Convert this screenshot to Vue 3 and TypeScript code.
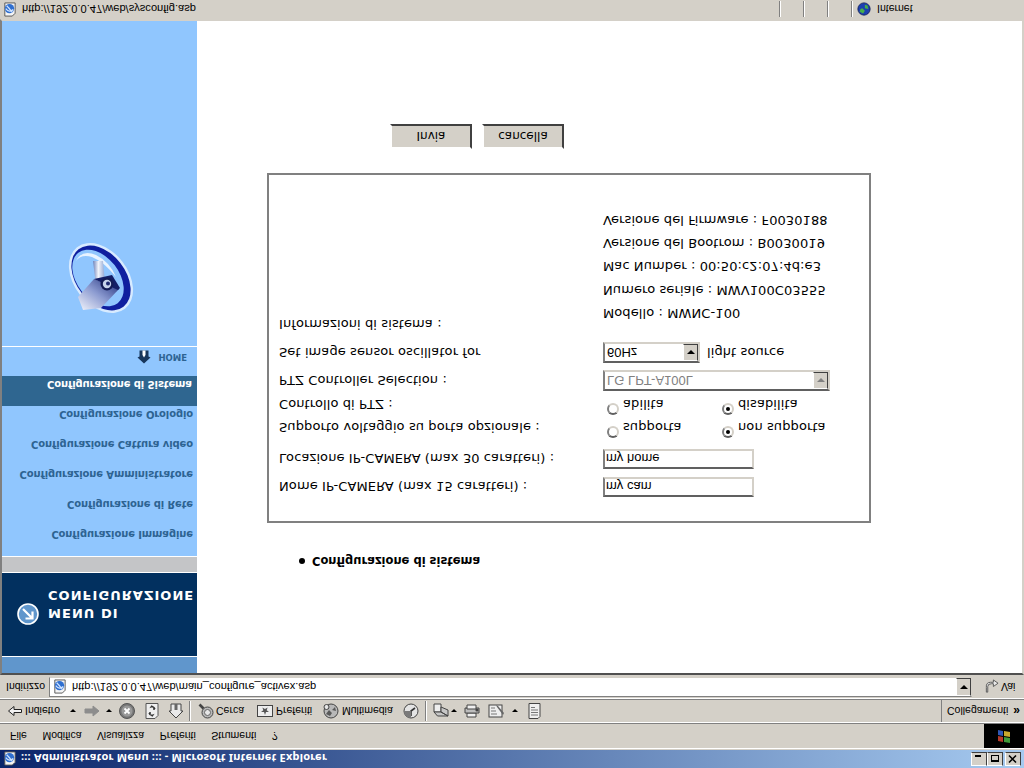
<template>
  <div class="window">
    <div class="titlebar">
      <svg class="title-icon" viewBox="0 0 16 16" v-html="icons.page" />
      <span class="title-text">::: Administrator Menu ::: - Microsoft Internet Explorer</span>
      <div class="win-buttons">
        <span class="win-btn"><i class="glyph-min" /></span>
        <span class="win-btn"><i class="glyph-max" /></span>
        <span class="win-btn close"><svg viewBox="0 0 10 10" width="10" height="10"><path d="M1 1.5 L8 8.5 M8 1.5 L1 8.5" stroke="#000" stroke-width="1.6" /></svg></span>
      </div>
    </div>

    <div class="menubar">
      <span v-for="m in menuItems" :key="m">{{ m }}</span>
      <div class="flag">
        <svg viewBox="0 0 16 16" width="16" height="16">
          <path d="M2 3 L7 2 V7 L2 8Z" fill="#b5392a" />
          <path d="M8 2 L14 1 V6 L8 7Z" fill="#3f9a3a" />
          <path d="M2 9 L7 8 V13 L2 14Z" fill="#2f57b5" />
          <path d="M8 8 L14 7 V12 L8 13Z" fill="#c9a92e" />
        </svg>
      </div>
    </div>

    <div class="toolbar">
      <template v-for="(t, i) in toolItems" :key="i">
        <span class="tool" :style="{ width: t.w + 'px' }">
          <svg v-if="t.icon" class="tool-icon" viewBox="0 0 16 16" v-html="icons[t.icon]" />
          <span v-else-if="t.label">{{ t.label }}</span>
          <i v-else-if="t.caret" class="caret" />
          <i v-else class="sep" />
        </span>
      </template>
      <div class="links">Collegamenti <b class="chevrons">»</b></div>
    </div>

    <div class="addressbar">
      <span class="addr-label">Indirizzo</span>
      <div class="addr-box">
        <svg class="addr-icon" viewBox="0 0 16 16" v-html="icons.page" />
        <span class="addr-url">http://192.0.0.47/web/main_configure_activex.asp</span>
        <span class="combo-btn"><i class="caret dark" /></span>
      </div>
      <span class="go">
        <svg viewBox="0 0 16 16" width="15" height="15">
          <path d="M4 2 V8 Q4 11 8 11 H10 V8 L15 11.5 L10 15 V12.5 H7 Q2 12.5 2.5 7 V2Z" fill="#e8e8e8" stroke="#555" stroke-width="1" />
        </svg>
        Vai
      </span>
    </div>

    <div class="frame">
      <aside class="sidebar">
        <div class="strip" />
        <div class="side-title">
          <svg class="side-arrow" viewBox="0 0 22 22" width="22" height="22">
            <circle cx="11" cy="11" r="10" fill="#5f96cc" stroke="#fff" stroke-width="1.6" />
            <path d="M6 16 L15 7 M8.5 6.5 H15.5 V13.5" fill="none" stroke="#fff" stroke-width="2.2" />
          </svg>
          <div class="side-title-text">MENU DI<br />CONFIGURAZIONE</div>
        </div>
        <div class="gray-band" />
        <nav class="side-nav">
          <a v-for="n in navItems" :key="n" class="nav-item" :class="{ active: n === activeNav }">{{ n }}</a>
          <a class="nav-home">
            <svg viewBox="0 0 14 14" width="14" height="14">
              <path d="M7 0.5 L13.5 6.5 L11.5 7.5 V13.5 H2.5 V7.5 L0.5 6.5Z" fill="#17365c" />
              <path d="M5.5 9 L7 6.5 L8.5 9 V13.5 H5.5Z" fill="#fff" />
            </svg>
            <span>HOME</span>
          </a>
          <div class="logo-area">
            <!-- drawn in the orientation of the capture, hence the extra flip -->
            <svg viewBox="0 0 110 90" width="110" height="90">
              <defs>
                <linearGradient id="cam-body" x1="0" y1="1" x2="1" y2="0">
                  <stop offset="0" stop-color="#f4f6fc" />
                  <stop offset="0.5" stop-color="#8b9ad0" />
                  <stop offset="1" stop-color="#1b2a78" />
                </linearGradient>
                <linearGradient id="cam-stem" x1="0" y1="0" x2="1" y2="0">
                  <stop offset="0" stop-color="#6f82b8" />
                  <stop offset="0.45" stop-color="#f2f5fb" />
                  <stop offset="1" stop-color="#8fa3cf" />
                </linearGradient>
              </defs>
              <g transform="matrix(1 0 0 -1 0 90)">
                <ellipse cx="61" cy="43" rx="39" ry="27" transform="rotate(52 61 43)" fill="#d8ebff" />
                <ellipse cx="61" cy="43" rx="36.5" ry="24.5" transform="rotate(52 61 43)" fill="#0f1f9f" />
                <ellipse cx="58" cy="43" rx="32" ry="21" transform="rotate(52 58 43)" fill="#90c6fe" />
                <path d="M36 26 Q42 14 56 20 Q70 27 76 42 Q64 27 52 22 Q41 19 36 26Z" fill="#e8f3ff" />
                <path d="M53 26 L63 26 L65 48 L56 50Z" fill="url(#cam-stem)" />
                <path d="M38 62 L54 44 L79 54 L61 73 L43 75Z" fill="url(#cam-body)" />
                <path d="M54 44 L72 40 L80 53 L78 55Z" fill="#141f66" />
                <circle cx="67" cy="49" r="6.5" fill="#131c55" />
                <circle cx="67" cy="49" r="4.2" fill="#c7d4ec" />
                <circle cx="68" cy="48.5" r="2" fill="#1d2a70" />
              </g>
            </svg>
          </div>
        </nav>
      </aside>

      <main class="content">
        <ul class="crumbs">
          <li>Configurazione di sistema</li>
        </ul>

        <form class="panel" @submit.prevent>
          <div class="row">
            <label>Nome IP-CAMERA (max 15 caratteri) :</label>
            <input class="text-field" value="my cam" />
          </div>
          <div class="row gap-8">
            <label>Locazione IP-CAMERA (max 30 caratteri) :</label>
            <input class="text-field" value="my home" />
          </div>
          <div class="row radio-row gap-10">
            <label>Supporto voltaggio su porta opzionale :</label>
            <div class="radios">
              <span class="radio-opt"><input class="radio" type="radio" name="volt" />supporta</span>
              <span class="radio-opt"><input class="radio" type="radio" name="volt" checked />non supporta</span>
            </div>
          </div>
          <div class="row radio-row gap-1">
            <label>Controllo di PTZ :</label>
            <div class="radios">
              <span class="radio-opt"><input class="radio" type="radio" name="ptz" />abilita</span>
              <span class="radio-opt"><input class="radio" type="radio" name="ptz" checked />disabilita</span>
            </div>
          </div>
          <div class="row gap-3">
            <label>PTZ Controller Selection :</label>
            <div class="select wide disabled">
              <span>LG LPT-A100L</span>
              <span class="combo-btn"><i class="caret gray" /></span>
            </div>
          </div>
          <div class="row gap-7">
            <label>Set image sensor oscillator for</label>
            <div class="select-line">
              <div class="select narrow">
                <span>60Hz</span>
                <span class="combo-btn"><i class="caret dark" /></span>
              </div>
              <span>light source</span>
            </div>
          </div>
          <div class="row info gap-10">
            <label>Informazioni di sistema :</label>
            <div class="info-list">
              <div v-for="line in infoLines" :key="line">{{ line }}</div>
            </div>
          </div>
        </form>

        <div class="actions">
          <button type="button" class="btn">Invia</button>
          <button type="button" class="btn">cancella</button>
        </div>
      </main>
    </div>

    <div class="statusbar">
      <svg class="status-icon" viewBox="0 0 16 16" v-html="icons.page" />
      <span class="status-url">http://192.0.0.47/web/sysconfig.asp</span>
      <span class="cell" />
      <span class="cell" />
      <span class="cell" />
      <span class="cell zone">
        <svg viewBox="0 0 16 16" width="14" height="14" v-html="icons.globe" />
        Internet
      </span>
    </div>
  </div>
</template>

<script setup lang="ts">
interface ToolItem {
  w: number
  icon?: string
  label?: string
  caret?: boolean
}

const menuItems = ['File', 'Modifica', 'Visualizza', 'Preferiti', 'Strumenti', '?']

const navItems = [
  'Configurazione Immagine',
  'Configurazione di Rete',
  'Configurazione Amministratore',
  'Configurazione Cattura video',
  'Configurazione Orologio',
  'Configurazione di Sistema'
]
const activeNav = 'Configurazione di Sistema'

const infoLines = [
  'Modello : MWNC-100',
  'Numero seriale : MWV100C03555',
  'Mac Number : 00:50:c2:07:4d:e3',
  'Versione del Bootrom : B0030019',
  'Versione del Firmware : F0030188'
]

const toolItems: ToolItem[] = [
  { w: 17, icon: 'back' },
  { w: 45, label: 'Indietro' },
  { w: 14, caret: true },
  { w: 22, icon: 'forward' },
  { w: 13, caret: true },
  { w: 25, icon: 'stop' },
  { w: 24, icon: 'refresh' },
  { w: 21, icon: 'home' },
  { w: 9 },
  { w: 18, icon: 'search' },
  { w: 41, label: 'Cerca' },
  { w: 19, icon: 'favorites' },
  { w: 47, label: 'Preferiti' },
  { w: 19, icon: 'media' },
  { w: 61, label: 'Multimedia' },
  { w: 22, icon: 'history' },
  { w: 8 },
  { w: 18, icon: 'mail' },
  { w: 13, caret: true },
  { w: 24, icon: 'print' },
  { w: 24, icon: 'edit' },
  { w: 14, caret: true },
  { w: 16, icon: 'discuss' }
]

const icons: Record<string, string> = {
  page: '<path d="M3 1 H11 L14 4 V15 H3Z" fill="#f4f4f4" stroke="#555"/><circle cx="8" cy="9" r="5" fill="#2f6fd0"/><path d="M4 9 Q8 4 12 8 M11 5 Q7 10 5 12" stroke="#cfe3ff" fill="none" stroke-width="1.4"/>',
  globe: '<circle cx="8" cy="8" r="7" fill="#1c3fb0" stroke="#10205c"/><path d="M3 5 L7 3 L9 6 L6 9 L4 8Z M9 9 L13 8 L12 12 L9 13Z" fill="#46b04a"/>',
  back: '<path d="M0.5 8 L6 3.5 V6.5 H13.5 V9.5 H6 V12.5Z" fill="#f2f2f2" stroke="#222"/>',
  forward: '<path d="M15 8 L9 3 V6 H1 V10 H9 V13Z" fill="#8d8d8d" stroke="#8d8d8d"/>',
  stop: '<circle cx="8" cy="8" r="7.5" fill="#777" stroke="#555"/><circle cx="8" cy="8" r="5.5" fill="#999"/><path d="M5.5 5.5 L10.5 10.5 M10.5 5.5 L5.5 10.5" stroke="#fff" stroke-width="1.8"/>',
  refresh: '<path d="M2 0.5 H11 L14 3.5 V15.5 H2Z" fill="#efefef" stroke="#555"/><path d="M5 6 Q6 3 9 4 L8 2.5 M11 10 Q10 13 7 12 L8 13.5 M5 6 L7 6 M11 10 L9 10" stroke="#333" fill="none" stroke-width="1.3"/>',
  home: '<path d="M8 1 L15 8 H13 V15 H3 V8 H1Z" fill="#e9e9e9" stroke="#444"/><path d="M6.5 9 H9.5 V15 H6.5Z" fill="#666"/>',
  search: '<circle cx="9.5" cy="6.5" r="5.5" fill="#b9b9b9" stroke="#444"/><circle cx="9.5" cy="6.5" r="3" fill="#e7e7e7" stroke="#666"/><path d="M5.5 10.5 L1.5 14.5" stroke="#444" stroke-width="2.6"/>',
  favorites: '<rect x="0.5" y="2.5" width="15" height="11" fill="#ededed" stroke="#444"/><path d="M8 4 L9 7 H12 L9.7 8.8 L10.6 11.5 L8 10 L5.4 11.5 L6.3 8.8 L4 7 H7Z" fill="#555"/>',
  media: '<circle cx="8" cy="8" r="7" fill="#b8b8b8" stroke="#444"/><path d="M3 5 L7 3 L9 6 L6 9Z M9 9 L13 8 L12 12Z" fill="#5a5a5a"/><circle cx="3.5" cy="12" r="2.5" fill="#e6e6e6" stroke="#444"/>',
  history: '<circle cx="8" cy="8" r="7" fill="#e4e4e4" stroke="#444"/><path d="M8 3 V8 L12 11" stroke="#333" fill="none" stroke-width="1.6"/><path d="M1 8 A7 7 0 0 1 8 1 L8 8Z" fill="#7a7a7a"/>',
  mail: '<path d="M1 7 H8 V15 H1Z" fill="#eee" stroke="#444"/><path d="M1 7 L4.5 3 H15 L8 7Z M8 7 L15 3 V9 L8 12Z" fill="#c6c6c6" stroke="#444"/>',
  print: '<path d="M3 2 H12 V6 H3Z" fill="#f0f0f0" stroke="#444"/><path d="M1 6 H15 V11 H1Z" fill="#bdbdbd" stroke="#444"/><path d="M3 10 H12 V14 H3Z" fill="#efefef" stroke="#444"/><circle cx="13" cy="9" r="1.6" fill="#444"/>',
  edit: '<rect x="1" y="2" width="13" height="12" fill="#eee" stroke="#444"/><path d="M3 5 H9 M3 8 H8 M3 11 H7" stroke="#777"/><path d="M15 4 L9 12 L8 14 L10 13 L16 6Z" fill="#666"/>',
  discuss: '<path d="M3 0.5 H12 L14 2.5 V15.5 H3Z" fill="#efefef" stroke="#444"/><path d="M5 4 H12 M5 6.5 H12 M5 9 H12 M5 11.5 H9" stroke="#777"/>'
}
</script>

<style>
html,
body {
  margin: 0;
  overflow: hidden;
  background: #fff;
}
</style>

<style scoped>
/* the capture this follows is upside down, so the whole window is flipped */
.window {
  width: 1024px;
  height: 768px;
  display: flex;
  flex-direction: column;
  overflow: hidden;
  transform: scaleY(-1);
  background: #d4d0c8;
  font-family: "Liberation Sans", Arial, sans-serif;
  font-size: 10.5px;
  color: #000;
}

.titlebar {
  height: 18px;
  flex: none;
  display: flex;
  align-items: center;
  padding: 0 3px 0 2px;
  background: linear-gradient(90deg, #0a246a 0%, #a6caf0 100%);
  color: #fff;
  border-bottom: 1px solid #d4d0c8;
}

.title-icon {
  width: 15px;
  height: 15px;
}

.title-text {
  margin-left: 4px;
  font-family: "Noto Sans", sans-serif;
  font-weight: 700;
  font-size: 11px;
  letter-spacing: 0.2px;
}

.win-buttons {
  margin-left: auto;
  display: flex;
}

.win-btn {
  width: 16px;
  height: 14px;
  box-sizing: border-box;
  display: flex;
  align-items: center;
  justify-content: center;
  background: #d4d0c8;
  border: 1px solid;
  border-color: #fff #404040 #404040 #fff;
  position: relative;
}

.win-btn.close {
  margin-left: 2px;
}

.glyph-min {
  width: 6px;
  height: 2px;
  background: #000;
  margin-top: 6px;
  margin-right: 2px;
}

.glyph-max {
  width: 8px;
  height: 7px;
  box-sizing: border-box;
  border: 1px solid #000;
  border-top-width: 2px;
}

.menubar {
  height: 24px;
  flex: none;
  display: flex;
  align-items: center;
  gap: 15.5px;
  padding-left: 10px;
  border-bottom: 1px solid #808080;
  border-top: 1px solid #fff;
}

.flag {
  margin-left: auto;
  width: 40px;
  height: 24px;
  background: #000;
  display: flex;
  align-items: center;
  justify-content: center;
}

.toolbar {
  height: 22px;
  flex: none;
  display: flex;
  align-items: center;
  padding-left: 8px;
  border-top: 1px solid #fff;
  border-bottom: 1px solid #808080;
}

.tool {
  flex: none;
  display: flex;
  align-items: center;
  height: 100%;
  white-space: nowrap;
}

.tool-icon {
  width: 16px;
  height: 16px;
}

.caret {
  width: 0;
  height: 0;
  border-left: 3px solid transparent;
  border-right: 3px solid transparent;
  border-top: 3px solid #000;
}

.caret.dark {
  border-left-width: 4px;
  border-right-width: 4px;
  border-top-width: 4px;
}

.caret.gray {
  border-left-width: 4px;
  border-right-width: 4px;
  border-top: 4px solid #808080;
}

.sep {
  width: 0;
  height: 20px;
  border-left: 1px solid #808080;
  border-right: 1px solid #fff;
}

.links {
  margin-left: auto;
  width: 83px;
  height: 100%;
  box-sizing: border-box;
  display: flex;
  align-items: center;
  gap: 5px;
  padding-left: 5px;
  border-left: 1px solid #808080;
  white-space: nowrap;
}

.chevrons {
  font-size: 12px;
}

.addressbar {
  height: 22px;
  flex: none;
  display: flex;
  align-items: center;
  padding-left: 6px;
  border-top: 1px solid #fff;
}

.addr-label {
  width: 38px;
  flex: none;
}

.addr-box {
  width: 923px;
  height: 20px;
  flex: none;
  box-sizing: border-box;
  margin-left: 5px;
  display: flex;
  align-items: center;
  background: #fff;
  border: 1px solid;
  border-color: #808080 #d4d0c8 #d4d0c8 #808080;
}

.addr-icon {
  width: 15px;
  height: 15px;
  margin-left: 2px;
}

.addr-url {
  margin-left: 5px;
  font-size: 11.1px;
}

.combo-btn {
  margin-left: auto;
  width: 15px;
  height: 100%;
  box-sizing: border-box;
  display: flex;
  align-items: center;
  justify-content: center;
  background: #d4d0c8;
  border: 1px solid;
  border-color: #fff #404040 #404040 #fff;
}

.go {
  margin-left: 12px;
  display: flex;
  align-items: center;
  gap: 2px;
}

.frame {
  flex: 1;
  min-height: 0;
  display: flex;
  margin-top: 1px;
  background: #fff;
  border: 2px solid;
  border-color: #505050 #d4d0c8 #d4d0c8 #808080;
}

.sidebar {
  width: 195px;
  flex: none;
  display: flex;
  flex-direction: column;
  background: #90c6fe;
  font-family: "DejaVu Sans", sans-serif;
}

.strip {
  height: 16px;
  flex: none;
  background: #6096cc;
  border-bottom: 1px solid #fff;
}

.side-title {
  height: 83px;
  flex: none;
  display: flex;
  align-items: flex-start;
  padding: 31px 0 0 15px;
  box-sizing: border-box;
  gap: 9px;
  background: #02305f;
}

.side-title-text {
  font-size: 13px;
  font-weight: 700;
  line-height: 18px;
  color: #fff;
  letter-spacing: 1.05px;
  margin-top: 3px;
  white-space: nowrap;
}

.gray-band {
  height: 15px;
  flex: none;
  background: #c4c5c7;
  border-top: 1px solid #fff;
  border-bottom: 1px solid #fff;
}

.side-nav {
  flex: 1;
  display: flex;
  flex-direction: column;
  align-items: flex-end;
}

.nav-item {
  height: 30px;
  box-sizing: border-box;
  display: flex;
  align-items: flex-end;
  justify-content: flex-end;
  align-self: stretch;
  padding: 0 4px 2px 0;
  font-size: 10px;
  letter-spacing: -0.12px;
  font-weight: 700;
  line-height: 13px;
  color: #2d6392;
  white-space: nowrap;
}

.nav-item.active {
  background: #2f6690;
  color: #fff;
  padding-right: 5px;
}

.nav-home {
  align-self: stretch;
  height: 30px;
  display: flex;
  align-items: center;
  justify-content: flex-end;
  gap: 7px;
  padding: 8px 10px 0 0;
  box-sizing: border-box;
  border-bottom: 1px solid #fff;
  font-size: 8.5px;
  font-weight: 700;
  color: #2d6392;
}

.logo-area {
  align-self: flex-start;
  margin: 21px 0 0 38px;
  height: 90px;
}

.content {
  flex: 1;
  min-width: 0;
  display: flex;
  flex-direction: column;
  padding-left: 70px;
  font-family: "DejaVu Sans", sans-serif;
  font-size: 13px;
  letter-spacing: 0.1px;
}

.crumbs {
  margin: 104px 0 0;
  padding: 0 0 0 32px;
  font-size: 11.5px;
  letter-spacing: 0;
  font-weight: 700;
  list-style: none;
  line-height: 16px;
}

.crumbs li {
  display: flex;
  align-items: center;
  gap: 7px;
}

.crumbs li::before {
  content: '';
  width: 6px;
  height: 6px;
  border-radius: 50%;
  background: #000;
}

.panel {
  width: 604px;
  height: 350px;
  box-sizing: border-box;
  margin-top: 30px;
  padding: 24px 0 0 10px;
  border: 2px solid #808080;
  display: flex;
  flex-direction: column;
}

.row {
  display: flex;
  align-items: center;
  min-height: 20px;
  white-space: nowrap;
}

.row.radio-row {
  height: 22px;
}

.gap-1 { margin-top: 1px; }
.gap-3 { margin-top: 3px; }
.gap-7 { margin-top: 7px; }
.gap-8 { margin-top: 8px; }
.gap-10 { margin-top: 10px; }

.row > label {
  width: 324px;
  flex: none;
}

.text-field {
  width: 151px;
  height: 20px;
  box-sizing: border-box;
  padding: 0 1px;
  font-family: "Liberation Sans", sans-serif;
  font-size: 13px;
  letter-spacing: 0;
  background: #fff;
  border: 2px solid;
  border-color: #606060 #d4d0c8 #d4d0c8 #808080;
  border-radius: 0;
  outline: none;
}

.radios {
  display: flex;
}

.radio-opt {
  width: 115px;
  display: flex;
  align-items: center;
  white-space: nowrap;
  padding-left: 4px;
  box-sizing: border-box;
}

.radio {
  appearance: none;
  width: 12px;
  height: 12px;
  margin: 0 4px 8px 0;
  border-radius: 50%;
  background: #fff;
  border: 2px solid;
  border-color: #606060 #d4d0c8 #d4d0c8 #808080;
  box-sizing: border-box;
  position: relative;
}

.radio:checked::after {
  content: '';
  position: absolute;
  left: 2px;
  top: 2px;
  width: 4px;
  height: 4px;
  border-radius: 50%;
  background: #000;
}

.select {
  height: 21px;
  box-sizing: border-box;
  display: flex;
  align-items: center;
  padding-left: 2px;
  font-family: "Liberation Sans", sans-serif;
  letter-spacing: 0;
  background: #fff;
  border: 2px solid;
  border-color: #606060 #d4d0c8 #d4d0c8 #808080;
}

.select.wide {
  width: 227px;
}

.select.narrow {
  width: 97px;
}

.select.disabled {
  color: #808080;
}

.select-line {
  display: flex;
  align-items: center;
  gap: 7px;
}

.row.info {
  align-items: flex-start;
}

.info-list {
  margin-top: 7px;
  line-height: 23.3px;
}

.actions {
  display: flex;
  gap: 10px;
  margin: 24px 0 0 123px;
}

.btn {
  width: 82px;
  height: 25px;
  padding: 0;
  font-family: "DejaVu Sans", sans-serif;
  font-size: 12px;
  background: #d4d0c8;
  border: 2px solid;
  border-color: #fff #404040 #404040 #fff;
  color: #000;
}

.statusbar {
  height: 19px;
  flex: none;
  display: flex;
  align-items: center;
  padding-left: 2px;
}

.status-icon {
  width: 15px;
  height: 15px;
}

.status-url {
  margin-left: 5px;
  width: 757px;
  flex: none;
  font-size: 11.1px;
}

.cell {
  width: 24px;
  height: 16px;
  box-sizing: border-box;
  flex: none;
  border-left: 1px solid #808080;
  box-shadow: inset 1px 0 0 #fff;
}

.cell.zone {
  width: 172px;
  display: flex;
  align-items: center;
  gap: 6px;
  padding-left: 5px;
}
</style>
